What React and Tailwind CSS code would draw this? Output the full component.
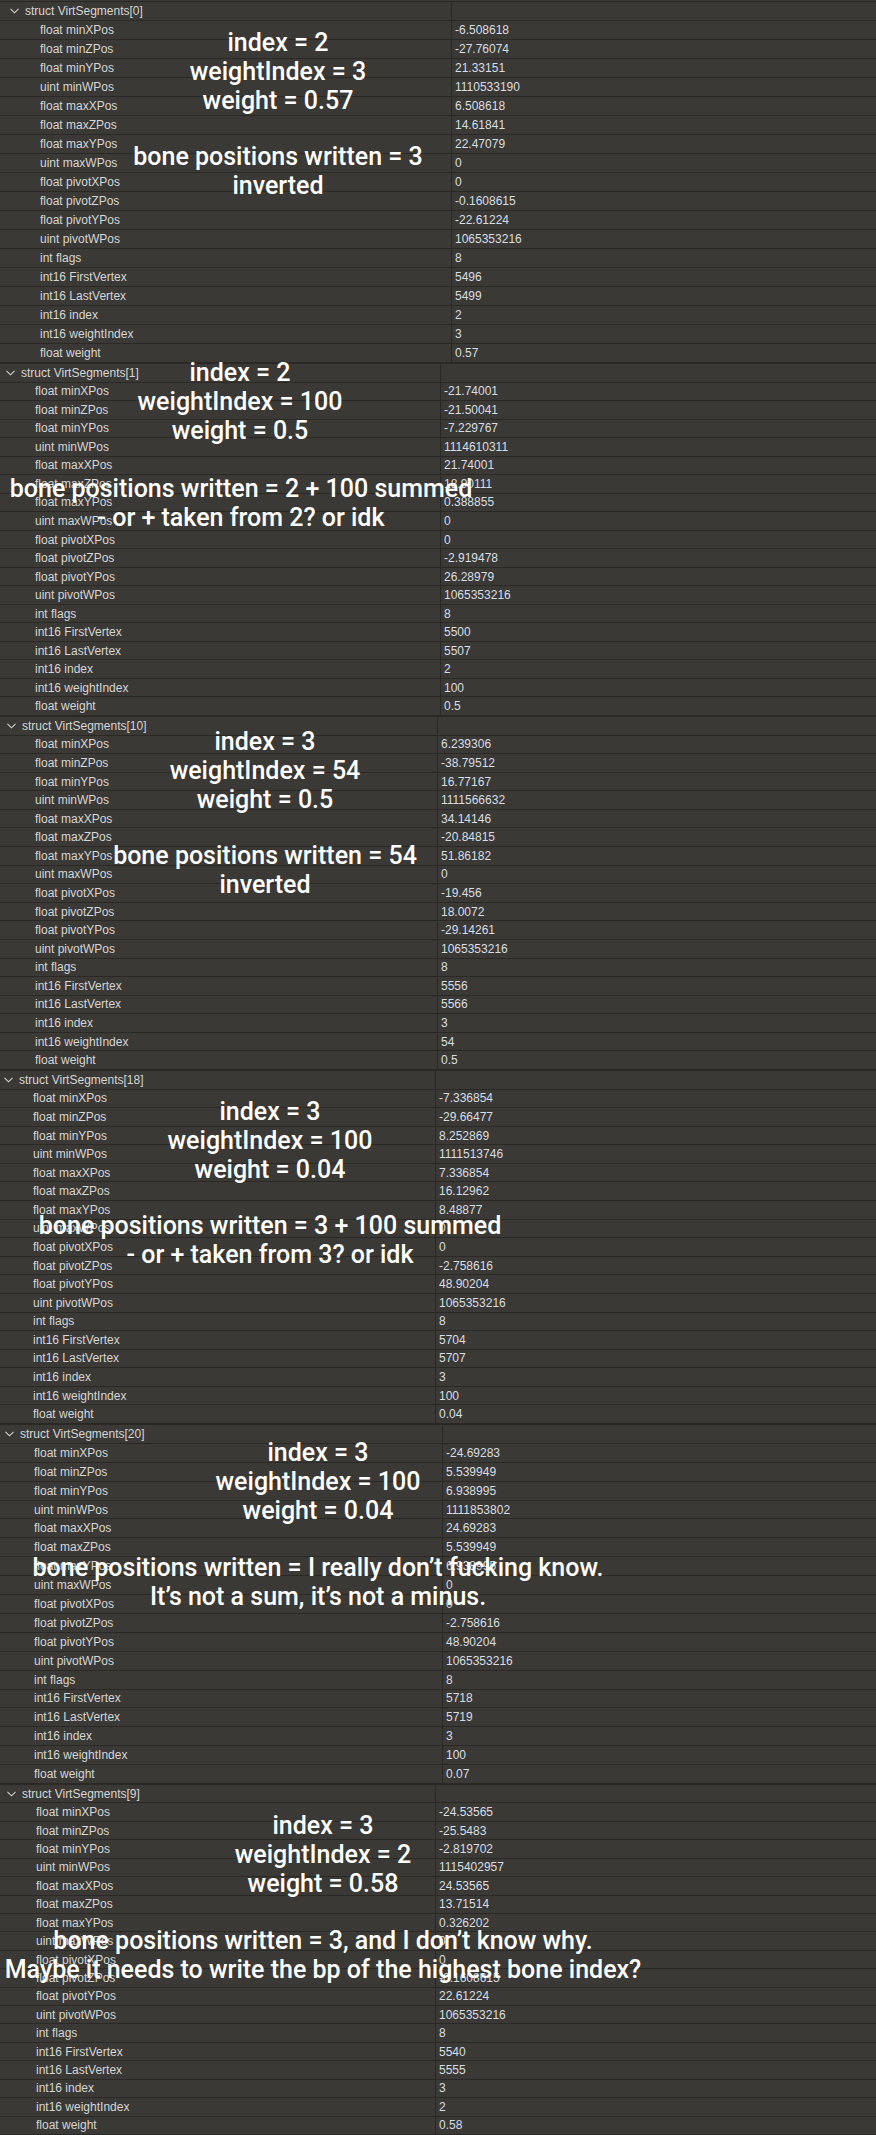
const LABELS = [
  "float minXPos",
  "float minZPos",
  "float minYPos",
  "uint minWPos",
  "float maxXPos",
  "float maxZPos",
  "float maxYPos",
  "uint maxWPos",
  "float pivotXPos",
  "float pivotZPos",
  "float pivotYPos",
  "uint pivotWPos",
  "int flags",
  "int16 FirstVertex",
  "int16 LastVertex",
  "int16 index",
  "int16 weightIndex",
  "float weight",
];

// each screenshot was pasted at its own zoom, so every block gets its own offsets
const SECTIONS = [
  {
    name: "struct VirtSegments[0]",
    box: "h-[363px] pt-px",
    col: "w-[452px]",
    label: "pl-[40px]",
    head: "pl-[10px]",
    values: ["-6.508618", "-27.76074", "21.33151", "1110533190", "6.508618", "14.61841", "22.47079", "0", "0", "-0.1608615", "-22.61224", "1065353216", "8", "5496", "5499", "2", "3", "0.57"],
    notes: [
      { pos: "left-[278px] top-[28px]", lines: ["index = 2", "weightIndex = 3", "weight = 0.57"] },
      { pos: "left-[278px] top-[142px]", lines: ["bone positions written = 3", "inverted"] },
    ],
  },
  {
    name: "struct VirtSegments[1]",
    box: "h-[353px]",
    col: "w-[441px]",
    label: "pl-[35px]",
    head: "pl-[6px]",
    values: ["-21.74001", "-21.50041", "-7.229767", "1114610311", "21.74001", "18.90111", "0.388855", "0", "0", "-2.919478", "26.28979", "1065353216", "8", "5500", "5507", "2", "100", "0.5"],
    notes: [
      { pos: "left-[240px] top-[-5px]", lines: ["index = 2", "weightIndex = 100", "weight = 0.5"] },
      { pos: "left-[241px] top-[111px]", lines: ["bone positions written = 2 + 100 summed", "- or + taken from 2? or idk"] },
    ],
  },
  {
    name: "struct VirtSegments[10]",
    box: "h-[354px]",
    col: "w-[438px]",
    label: "pl-[35px]",
    head: "pl-[7px]",
    values: ["6.239306", "-38.79512", "16.77167", "1111566632", "34.14146", "-20.84815", "51.86182", "0", "-19.456", "18.0072", "-29.14261", "1065353216", "8", "5556", "5566", "3", "54", "0.5"],
    notes: [
      { pos: "left-[265px] top-[11px]", lines: ["index = 3", "weightIndex = 54", "weight = 0.5"] },
      { pos: "left-[265px] top-[125px]", lines: ["bone positions written = 54", "inverted"] },
    ],
  },
  {
    name: "struct VirtSegments[18]",
    box: "h-[354px]",
    col: "w-[436px]",
    label: "pl-[33px]",
    head: "pl-[4px]",
    values: ["-7.336854", "-29.66477", "8.252869", "1111513746", "7.336854", "16.12962", "8.48877", "0", "0", "-2.758616", "48.90204", "1065353216", "8", "5704", "5707", "3", "100", "0.04"],
    notes: [
      { pos: "left-[270px] top-[27px]", lines: ["index = 3", "weightIndex = 100", "weight = 0.04"] },
      { pos: "left-[270px] top-[141px]", lines: ["bone positions written = 3 + 100 summed", "- or + taken from 3? or idk"] },
    ],
  },
  {
    name: "struct VirtSegments[20]",
    box: "h-[360px]",
    col: "w-[443px]",
    label: "pl-[34px]",
    head: "pl-[5px]",
    values: ["-24.69283", "5.539949", "6.938995", "1111853802", "24.69283", "5.539949", "6.938995", "0", "0", "-2.758616", "48.90204", "1065353216", "8", "5718", "5719", "3", "100", "0.07"],
    notes: [
      { pos: "left-[318px] top-[14px]", lines: ["index = 3", "weightIndex = 100", "weight = 0.04"] },
      { pos: "left-[318px] top-[129px]", lines: ["bone positions written = I really don’t fucking know.", "It’s not a sum, it’s not a minus."] },
    ],
  },
  {
    name: "struct VirtSegments[9]",
    box: "h-[351px]",
    col: "w-[436px]",
    label: "pl-[36px]",
    head: "pl-[7px]",
    values: ["-24.53565", "-25.5483", "-2.819702", "1115402957", "24.53565", "13.71514", "0.326202", "0", "0", "-0.1608615", "22.61224", "1065353216", "8", "5540", "5555", "3", "2", "0.58"],
    notes: [
      { pos: "left-[323px] top-[27px]", lines: ["index = 3", "weightIndex = 2", "weight = 0.58"] },
      { pos: "left-[323px] top-[142px]", lines: ["bone positions written = 3, and I don’t know why.", "Maybe it needs to write the bp of the highest bone index?"] },
    ],
  },
];

function Chevron() {
  return (
    <svg width="9" height="6" viewBox="0 0 9 6" className="shrink-0">
      <polyline points="0.5,0.8 4.5,4.8 8.5,0.8" fill="none" stroke="#d4d4d4" strokeWidth="1.1" />
    </svg>
  );
}

function Row({ s, children, value }) {
  return (
    <div className="flex border-b border-[#2a2926] min-h-0">
      <div className={`${s.col} shrink-0 flex items-center border-r border-[#2a2926]`}>{children}</div>
      <div className="flex items-center pl-[3px] text-[#d9dee4]">{value}</div>
    </div>
  );
}

function Section({ s }) {
  return (
    <div className={`relative ${s.box}`}>
      <div className="grid h-full grid-rows-[repeat(19,minmax(0,1fr))] border-t border-[#2a2926]">
        <Row s={s} value="">
          <div className={`flex items-center ${s.head}`}>
            <Chevron />
            <span className="ml-[6px]">{s.name}</span>
          </div>
        </Row>
        {LABELS.map((l, i) => (
          <Row key={l} s={s} value={s.values[i]}>
            <span className={s.label}>{l}</span>
          </Row>
        ))}
      </div>
      {s.notes.map((n, i) => (
        <div
          key={i}
          className={`absolute ${n.pos} -translate-x-1/2 text-center whitespace-nowrap font-['Roboto',sans-serif] font-medium text-[25px] leading-[29px] text-white`}
        >
          {n.lines.map(t => (
            <div key={t}>{t}</div>
          ))}
        </div>
      ))}
    </div>
  );
}

export default function App() {
  return (
    <div className="w-[876px] h-[2135px] overflow-hidden bg-[#3a3935] text-[#d6d6d6] text-[12px] font-['Liberation_Sans',Arial,sans-serif]">
      {SECTIONS.map(s => (
        <Section key={s.name} s={s} />
      ))}
    </div>
  );
}
